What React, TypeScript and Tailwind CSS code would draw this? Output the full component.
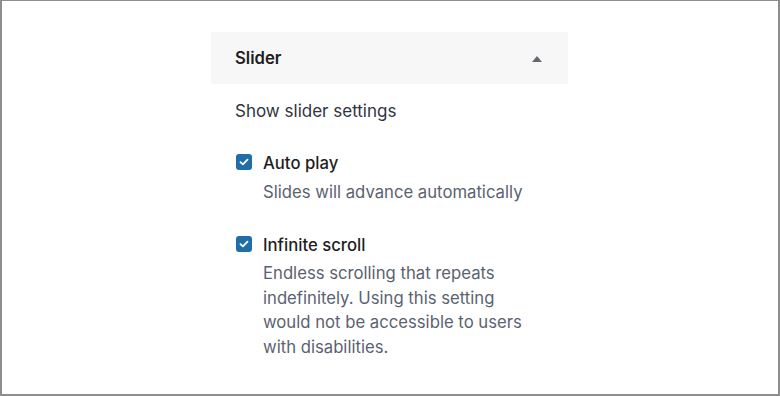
import React from "react";

function Check() {
  return (
    <div className="w-4 h-4 ml-px rounded-[3px] bg-[#1f6ea8] flex items-center justify-center shrink-0 mt-[3px]">
      <svg width="10" height="8" viewBox="0 0 10 8" fill="none">
        <path d="M1.5 4.2 L3.9 6.4 L8.5 1.6" stroke="white" strokeWidth="1.8" strokeLinecap="round" strokeLinejoin="round" />
      </svg>
    </div>
  );
}

export default function App() {
  return (
    <div
      className="w-[780px] h-[396px] bg-white border-t border-l-2 border-r-2 border-b-2 border-[#8e8e8e] box-border overflow-hidden"
      style={{ fontFamily: "Inter, 'Noto Sans', sans-serif" }}
    >
      <div className="ml-[209px] mt-[31px] w-[357px]">
        <div className="h-[52px] pt-px bg-[#f7f7f7] flex items-center justify-between px-6">
          <span className="text-[16.7px] font-semibold text-[#1e1e1e]">Slider</span>
          <svg width="12" height="7" viewBox="0 0 12 7" className="mr-[1px]">
            <path d="M1 7 L6 1 L11 7 Z" fill="#646970" />
          </svg>
        </div>
        <div className="pl-6 pt-[15px]">
          <div className="text-[17px] leading-6 text-[#2f3540]">Show slider settings</div>
          <div className="flex gap-[11px] mt-7">
            <Check />
            <div>
              <div className="text-[16.7px] leading-6 font-medium text-[#1e1e1e]">Auto play</div>
              <div className="mt-[5px] text-[16.7px] leading-6 text-[#5a6270]">Slides will advance automatically</div>
            </div>
          </div>
          <div className="flex gap-[11px] mt-[29px]">
            <Check />
            <div>
              <div className="text-[16.7px] leading-6 font-medium text-[#1e1e1e]">Infinite scroll</div>
              <div className="mt-1 w-[272px] text-[16.7px] leading-[24.7px] text-[#5a6270]">
                Endless scrolling that repeats indefinitely. Using this setting would not be accessible to users with disabilities.
              </div>
            </div>
          </div>
        </div>
      </div>
    </div>
  );
}
